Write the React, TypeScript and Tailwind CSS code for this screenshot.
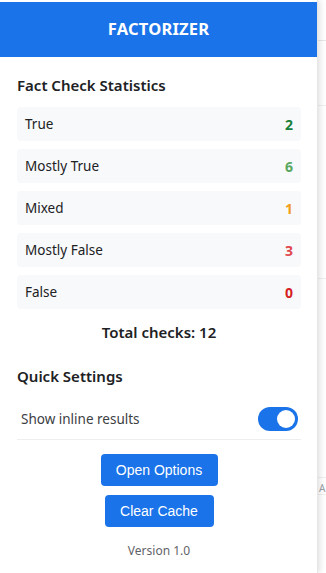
import React from "react";

const rows = [
  { label: "True", value: "2", color: "text-[#188038]" },
  { label: "Mostly True", value: "6", color: "text-[#5aa85f]" },
  { label: "Mixed", value: "1", color: "text-[#f29d1a]" },
  { label: "Mostly False", value: "3", color: "text-[#e0474c]" },
  { label: "False", value: "0", color: "text-[#d61f1f]" },
];

export default function App() {
  return (
    <div className="flex w-[326px] h-[573px] bg-white overflow-hidden" style={{ fontFamily: '"Noto Sans", "Open Sans", sans-serif' }}>
      <div className="relative z-10 w-[318px] shrink-0 bg-white shadow-[2px_0_6px_rgba(0,0,0,0.12)] border-r border-[#e6e6e6] flex flex-col">
        <div className="h-[2px] bg-white" />
        <div className="h-[55px] bg-[#1a73e8] flex items-center justify-center">
          <span className="text-white font-bold text-[16.5px] tracking-[0.2px]">FACTORIZER</span>
        </div>
        <div className="px-[17px] flex flex-col">
          <div className="mt-[17px] text-[15px] font-semibold text-[#202124] leading-[22px]">Fact Check Statistics</div>
          <div className="mt-[11px] flex flex-col gap-[8px] w-[284px]">
            {rows.map((r) => (
              <div key={r.label} className="h-[34px] rounded-[4px] bg-[#f8f9fa] flex items-center justify-between px-[8px]">
                <span className="text-[13.5px] text-[#202124]">{r.label}</span>
                <span className={"text-[14px] font-bold " + r.color}>{r.value}</span>
              </div>
            ))}
          </div>
          <div className="mt-[12px] w-[284px] text-center text-[15px] font-semibold text-[#202124] leading-[22px]">Total checks: 12</div>
          <div className="mt-[22px] text-[15px] font-semibold text-[#202124] leading-[22px]">Quick Settings</div>
          <div className="mt-[14px] w-[284px] flex items-center justify-between pl-[4px] pr-[3px] pt-[6px] pb-[8px] border-b border-[#eeeeee]">
            <span className="text-[13.5px] text-[#3c4043] leading-[24px]">Show inline results</span>
            <div className="w-[40px] h-[24px] rounded-full bg-[#1a73e8] flex items-center justify-end pr-[3px]">
              <div className="w-[18px] h-[18px] rounded-full bg-white" />
            </div>
          </div>
          <div className="w-[284px] flex flex-col items-center mt-[14px] gap-[9px]" style={{ fontFamily: '"Liberation Sans", Arial, sans-serif' }}>
            <button className="h-[32px] w-[117px] rounded-[4px] bg-[#1a73e8] text-white text-[14px]">Open Options</button>
            <button className="h-[32px] w-[109px] rounded-[4px] bg-[#1a73e8] text-white text-[14px]">Clear Cache</button>
          </div>
          <div className="w-[284px] text-center mt-[16px] text-[12px] leading-[16px] text-[#5f6368]">Version 1.0</div>
        </div>
      </div>
      <div className="flex-1 relative bg-white">
        <div className="absolute left-0 right-0 top-[40px] h-px bg-[#e8e8e8]" />
        <div className="absolute left-0 right-0 top-[105px] h-px bg-[#efefef]" />
        <div className="absolute left-0 right-0 top-[278px] h-px bg-[#efefef]" />
        <div className="absolute left-0 right-0 top-[477px] h-px bg-[#efefef]" />
        <div className="absolute left-[1px] top-[481px] text-[10px] text-[#9aa0a6]">A</div>
        <div className="absolute left-0 right-0 top-[494px] h-px bg-[#efefef]" />
      </div>
    </div>
  );
}
